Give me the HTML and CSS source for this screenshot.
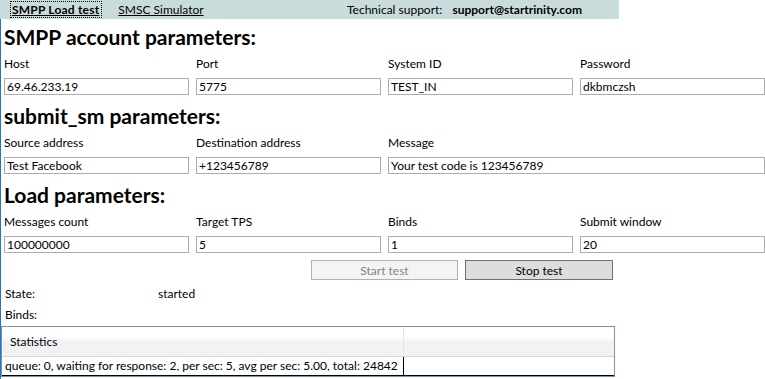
FILE: index.html
```html
<!DOCTYPE html>
<html lang="en">
<head>
  <meta charset="UTF-8">
  <title>SMPP Load test</title>
  <link rel="stylesheet" href="styles.css">
</head>
<body>
  <nav class="tabs">
    <a class="tab active" href="#">SMPP Load test</a>
    <a class="tab" href="#">SMSC Simulator</a>
    <span class="support">Technical support: <b>support@startrinity.com</b></span>
  </nav>
  <main class="page">
    <section class="group">
      <h2>SMPP account parameters:</h2>
      <div class="fields">
        <label class="field"><span>Host</span><input type="text" value="69.46.233.19"></label>
        <label class="field"><span>Port</span><input type="text" value="5775"></label>
        <label class="field"><span>System ID</span><input type="text" value="TEST_IN"></label>
        <label class="field"><span>Password</span><input type="text" value="dkbmczsh"></label>
      </div>
    </section>
    <section class="group">
      <h2>submit_sm parameters:</h2>
      <div class="fields">
        <label class="field"><span>Source address</span><input type="text" value="Test Facebook"></label>
        <label class="field"><span>Destination address</span><input type="text" value="+123456789"></label>
        <label class="field wide"><span>Message</span><input type="text" value="Your test code is 123456789"></label>
      </div>
    </section>
    <section class="group">
      <h2>Load parameters:</h2>
      <div class="fields">
        <label class="field"><span>Messages count</span><input type="text" value="100000000"></label>
        <label class="field"><span>Target TPS</span><input type="text" value="5"></label>
        <label class="field"><span>Binds</span><input type="text" value="1"></label>
        <label class="field"><span>Submit window</span><input type="text" value="20"></label>
      </div>
    </section>
    <div class="actions">
      <button class="btn" disabled>Start test</button>
      <button class="btn">Stop test</button>
    </div>
    <div class="status"><span>State:</span><span>started</span></div>
    <div class="status"><span>Binds:</span><span></span></div>
    <div class="list">
      <div class="list-head">
        <div class="cell first">Statistics</div>
        <div class="cell"></div>
      </div>
      <div class="list-row">
        <div class="cell first">queue: 0, waiting for response: 2, per sec: 5, avg per sec: 5.00, total: 24842</div>
        <div class="cell"></div>
      </div>
    </div>
  </main>
</body>
</html>
```

FILE: styles.css
```css
body {
  margin: 0;
  font-family: Lato, "Open Sans", sans-serif;
  font-size: 12px;
  color: #000;
  background: #fff;
}
.tabs {
  display: flex;
  align-items: center;
  width: 619px;
  height: 19px;
  padding: 0 37px 0 11px;
  box-sizing: border-box;
  background: #c9dcdc;
}
.tab {
  color: #000;
  text-decoration: underline;
  line-height: 15px;
  margin-right: 17px;
}
.tab.active {
  font-weight: bold;
  outline: 1px dotted #000;
  padding: 0 2px 0 1px;
  letter-spacing: 0.2px;
}
.support {
  margin-left: auto;
}
.support b {
  margin-left: 7px;
}
.page {
  border-left: 1px solid #1a78d0;
  padding: 5px 0 0 3px;
  min-height: calc(100vh - 24px);
}
.group {
  margin-bottom: 8px;
}
.group h2 {
  margin: 0;
  font-size: 21px;
  line-height: 26px;
  font-weight: bold;
}
.fields {
  display: grid;
  grid-template-columns: repeat(4, 185px);
  column-gap: 7px;
  margin-top: 6px;
}
.field {
  display: flex;
  flex-direction: column;
  gap: 6px;
  line-height: 16px;
}
.field.wide {
  grid-column: span 2;
}
.field input {
  height: 17px;
  box-sizing: border-box;
  margin: 0;
  padding: 0 2px;
  border: 1px solid #abadb3;
  font: inherit;
  color: #000;
  outline: none;
}
.actions {
  display: flex;
  gap: 7px;
  margin: -1px 0 3px 307px;
}
.btn {
  width: 147px;
  height: 20px;
  margin: 0;
  padding: 0;
  font: inherit;
  color: #000;
  background: #dddddd;
  border: 1px solid #707070;
}
.btn + .btn {
  width: 148px;
}
.btn:disabled {
  color: #838383;
  background: #f4f4f4;
  border-color: #adb2b5;
}
.status {
  display: grid;
  grid-template-columns: 153px auto;
  line-height: 21px;
  padding-left: 1px;
}
.list {
  width: 614px;
  box-sizing: border-box;
  margin: 1px 0 0 -3px;
  border: 1px solid #7893bd;
}
.list-head {
  display: flex;
  height: 30px;
  box-sizing: border-box;
  border-bottom: 1px solid #d5d5d5;
  background: linear-gradient(#fff 0, #fff 35%, #f1f2f4 50%, #f1f2f4 100%);
}
.list-head .cell {
  display: flex;
  align-items: center;
  padding-left: 8px;
}
.cell.first {
  width: 402px;
  box-sizing: border-box;
}
.list-head .cell.first {
  border-right: 1px solid #e4e4e4;
}
.list-row {
  display: flex;
  height: 19px;
  box-sizing: border-box;
  border-bottom: 1px solid #000;
  line-height: 18px;
}
.list-row .cell.first {
  padding-left: 3px;
  border-right: 1px solid #000;
  white-space: nowrap;
}
```
